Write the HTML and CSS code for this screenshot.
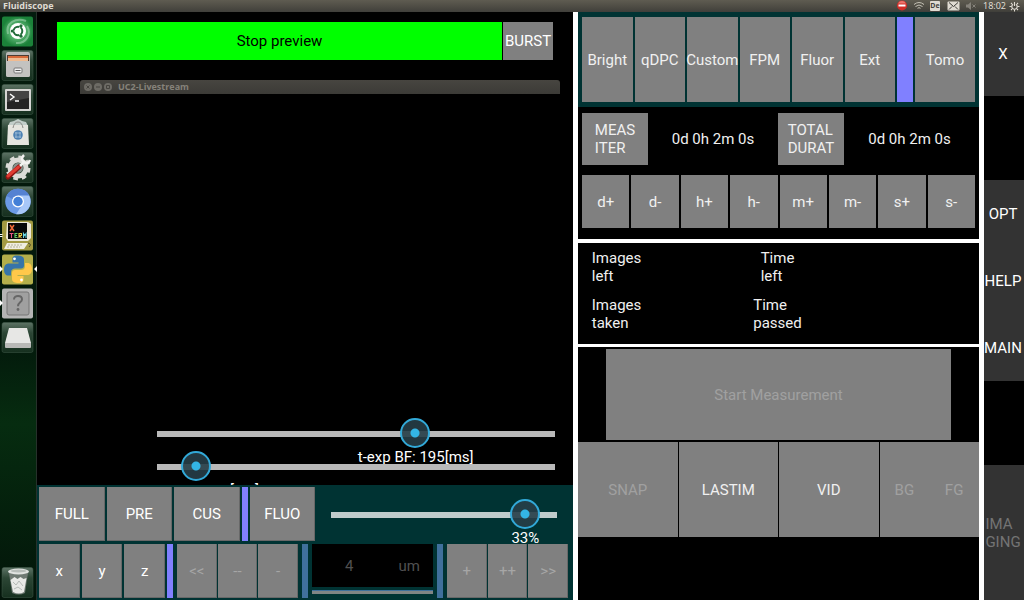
FILE: index.html
```html
<!DOCTYPE html>
<html lang="en">
<head>
<meta charset="utf-8">
<title>Fluidiscope</title>
<link rel="stylesheet" href="styles.css">
</head>
<body>
<header class="menubar">
  <span class="menubar-title">Fluidiscope</span>
  <div class="tray">
    <svg width="12" height="12" viewBox="0 0 12 12"><circle cx="6" cy="5.500" r="5" fill="#d22d27"/><path d="M2 3.500a4.500 4.500 0 0 1 8 0z" fill="#ea756c"/><rect x="2.500" y="4.500" width="7" height="2" fill="#fff"/></svg>
    <svg width="12" height="12" viewBox="0 0 12 12" fill="none" stroke="#c5c2b6"><path d="M1 4.500q5-4 10 0M2.500 6.500q3.500-3 7 0M4.500 8.300q1.500-1.300 3 0"/></svg>
    <span class="lang">De</span>
    <svg width="13" height="10" viewBox="0 0 13 10"><rect x=".5" y=".5" width="12" height="9" rx="1" fill="#dfdbd2"/><path d="M2 1.500l4.500 4 4.500-4M2 8.500l3-3M11 8.500l-3-3" fill="none" stroke="#3c3b37" stroke-width="1"/></svg>
    <svg width="12" height="12" viewBox="0 0 12 12"><path d="M1 4.500h2l3-2.500v8L3 7.500H1z" fill="#85827a"/><path d="M7.500 4.500l3 3M10.500 4.500l-3 3" stroke="#85827a"/></svg>
    <time class="clock">18:02</time>
    <svg width="11" height="11" viewBox="0 0 11 11" fill="none" stroke="#dfdbd2"><path d="M4 3.300a2.700 2.700 0 1 0 3 0" stroke-width="1.200"/><path d="M5.500 1v4M5.500 8.500v2M.5 5.500h2M8.500 5.500h2M2 2l1 1M9 2L8 3M2 9l1-1M9 9L8 8" stroke-width="1.100"/></svg>
  </div>
</header>

<main class="desktop">
  <nav class="launcher" aria-label="Launcher">
    <button class="tile" aria-label="Dash"><svg viewBox="0 0 37 31"><defs><radialGradient id="dash"><stop offset="0" stop-color="#b9dfc4"/><stop offset=".55" stop-color="#4fab68"/><stop offset="1" stop-color="#1b8239"/></radialGradient><linearGradient id="plate" x2="0" y2="1"><stop offset="0" stop-color="#5d7365"/><stop offset=".35" stop-color="#2c4635"/><stop offset="1" stop-color="#16301f"/></linearGradient></defs><rect x="2" y=".5" width="31" height="30" rx="2" fill="url(#dash)"/><path d="M8 18C5 7 16 1 26 5M27 10c5 8-1 18-11 17" fill="none" stroke="#9fd3ad" stroke-width="2" opacity=".6"/><circle cx="18" cy="15" r="8" fill="#fff"/><circle cx="18" cy="15" r="4.300" fill="none" stroke="#206a38" stroke-width="2"/><path d="M18 15L12 15M18 15l3-6M18 15l3 6" stroke="#fff"/><g fill="#206a38"><circle cx="12.300" cy="15" r="1.600"/><circle cx="21" cy="9.800" r="1.600"/><circle cx="21" cy="20.200" r="1.600"/></g></svg></button>
    <button class="tile" aria-label="Files"><svg viewBox="0 0 37 31"><rect class="plate" x="2" y=".5" width="31" height="30" rx="2"/><rect x="6" y="2" width="24" height="25" rx="2" fill="#b9b8b6"/><rect x="7" y="5" width="22" height="7" fill="#4d3c33"/><path d="M8 6h20v5H8z" fill="#d76a3a"/><path d="M8 8h20v4H8z" fill="#f0bb91"/><path d="M6 11h24v14q0 2-2 2H8q-2 0-2-2z" fill="#c3c2c0"/><rect x="14" y="18" width="8" height="5" rx="1" fill="#eee" stroke="#777"/><path d="M15.500 20.500h5" stroke="#555"/></svg></button>
    <button class="tile" aria-label="Terminal"><svg viewBox="0 0 37 31"><rect class="plate" x="2" y=".5" width="31" height="30" rx="2"/><rect x="5" y="5" width="26" height="22" rx="1" fill="#d5d5d3"/><rect x="7" y="7" width="22" height="18" fill="#242424"/><path d="M7 7h22v7L7 18z" fill="#444"/><path d="M10 10l4 3-4 3M15 17h4" fill="none" stroke="#fff" stroke-width="1.400"/></svg></button>
    <button class="tile" aria-label="Software"><svg viewBox="0 0 37 31"><rect class="plate" x="2" y=".5" width="31" height="30" rx="2"/><path d="M8 8l2-4 4-1 4-2 4 2 4 1 2 4z" fill="#c3ceca"/><path d="M8 7h20l1 20H7z" fill="#e6e5df"/><path d="M13 10q1-6 5-6t5 6" fill="none" stroke="#8c8c88"/><circle cx="18" cy="17" r="4.800" fill="#4c80b2"/><path d="M15 15h6M15 19h6M16 14v6M20 14v6" stroke="#a4c1db" stroke-width=".8"/></svg></button>
    <button class="tile" aria-label="Settings"><svg viewBox="0 0 37 31"><rect class="plate" x="2" y=".5" width="31" height="30" rx="2"/><circle cx="18" cy="16" r="8" fill="none" stroke="#dbdbd7" stroke-width="5"/><circle cx="18" cy="16" r="11" fill="none" stroke="#dbdbd7" stroke-width="3" stroke-dasharray="4.600 4.040"/><circle cx="18" cy="16" r="5" fill="#88918c"/><path d="M8 25L19 15" stroke="#8e1512" stroke-width="5" stroke-linecap="round"/><path d="M8 24L18.500 15" stroke="#e03b32" stroke-width="3" stroke-linecap="round"/><path d="M20 14l4-4M24 3q-4 4 0 7t6-2" fill="none" stroke="#f2f2f0" stroke-width="2.500"/></svg></button>
    <button class="tile" aria-label="Browser"><svg viewBox="0 0 37 31"><rect class="plate" x="2" y=".5" width="31" height="30" rx="2"/><circle cx="18" cy="15.500" r="12.800" fill="#6b9ae6"/><path d="M18 15.500L6.500 10A12.800 12.800 0 0 1 29.400 9.500z" fill="#5582d2"/><path d="M18 9.500H29A12.800 12.800 0 0 1 16 28.200l6-9z" fill="#a7c7f8"/><circle cx="18" cy="15.500" r="6" fill="#fff"/><circle cx="18" cy="15.500" r="4.700" fill="#427fd7"/></svg></button>
    <button class="tile" aria-label="XTerm"><svg viewBox="0 0 37 31"><rect x="2" y=".5" width="31" height="30" rx="2" fill="#a29a42"/><path d="M0 14.500h2.500M0 16.500h2.500" stroke="#fff"/><path d="M7 2h21l3 2v14l-3 3H8l-2-3z" fill="#ece8d8"/><rect x="8" y="3" width="19" height="16" fill="#080808"/><path d="M10 5l4 6M14 5l-4 6" stroke="#f06b38" stroke-width="1.500"/><g fill="none" stroke-width="1.100"><path d="M9.500 13.500h4M11.500 13.500V18" stroke="#e85585"/><path d="M17.500 13.500h-2.500v4h2.500M15 15.500h2" stroke="#5dce67"/><path d="M19 18v-4.500h2.500v2H19.500l2 2.500" stroke="#dfc343"/><path d="M23.500 18v-4.500l1.200 2 1.300-2V18" stroke="#68d6e1"/></g><path d="M7 23h21l-4 6H4z" fill="#f0eddf"/><path d="M8 25h14M7 27h13" stroke="#8f896d" stroke-width=".6" stroke-dasharray="2 1"/><path d="M28 23q4 1 1 4" fill="none" stroke="#4b4724"/></svg></button>
    <button class="tile" aria-label="Python"><svg viewBox="0 0 37 31"><rect x="2" y=".5" width="31" height="30" rx="2" fill="#b3af4b"/><path d="M0 12l3 3-3 3zM37 12l-3 3 3 3z" fill="#fff"/><path d="M17.500 1.500c-5 0-5 2-5 4v3h6v1H9c-3 0-5 2-5 6s2 6 4 6h3v-3c0-3 2-4 4-4h6c2 0 3-1 3-3V5.500c0-3-3-4-6.500-4z" fill="#3674a9"/><path d="M18.500 29c5 0 5-2 5-4v-3h-6v-1H27c3 0 5-2 5-6s-2-6-4-6h-3v3c0 3-2 4-4 4h-6c-2 0-3 1-3 3V25c0 3 3 4 6.500 4z" fill="#ffc84a"/><circle cx="14.500" cy="4.800" r="1.400" fill="#fff"/><circle cx="21.500" cy="26" r="1.400" fill="#fff"/></svg></button>
    <button class="tile" aria-label="Unknown application"><svg viewBox="0 0 37 31"><rect x="2" y=".5" width="31" height="30" rx="2" fill="#b4b4b4"/><path d="M0 12l3 3-3 3z" fill="#fff"/><rect x="7" y="4" width="22" height="23" rx="2" fill="#a0a0a0" stroke="#777"/><path d="M14 11.500c0-5 8-4.500 8-.3 0 3.300-4 3-4 7" fill="none" stroke="#666" stroke-width="2"/><circle cx="18" cy="21.500" r="1.400" fill="#666"/></svg></button>
    <button class="tile" aria-label="Drive"><svg viewBox="0 0 37 31"><rect class="plate" x="2" y=".5" width="31" height="30" rx="2"/><path d="M9 6h18l4 15v4H5v-4z" fill="#e7e7e5"/><path d="M5 21h26v4q0 1-1 1H6q-1 0-1-1z" fill="#b9b9b7"/></svg></button>
    <button class="tile tile-last" aria-label="Trash"><svg viewBox="0 0 37 31"><rect class="plate" x="2" y=".5" width="31" height="30" rx="2"/><path d="M9 6h19l-3 20q-6 3-13 0z" fill="#6f7a73"/><path d="M10.500 13l4-3 3 2 3-2 3 2 3-1-2.500 14q-5 3-11 0z" fill="#e8e9e6"/><path d="M13 15l3 3 3-4 4 5M14 22l4-2 4 3" fill="none" stroke="#b5bab6"/><ellipse cx="18.500" cy="4.500" rx="10.500" ry="3" fill="#e0e3e0"/><ellipse cx="18.500" cy="4" rx="8" ry="1.500" fill="#b7bdb9"/></svg></button>
  </nav>

  <section class="stage">
    <div class="preview">
      <div class="preview-actions">
        <button class="btn btn-stop">Stop preview</button>
        <button class="btn btn-burst">BURST</button>
      </div>
      <div class="window-title">
        <svg width="30" height="10" viewBox="0 0 30 10"><g fill="#6d6b65"><circle cx="5" cy="5" r="4"/><circle cx="15" cy="5" r="4"/><circle cx="25" cy="5" r="4"/></g><path d="M3.500 3.500l3 3M6.500 3.500l-3 3M13 5h4M23.500 3.500h3v3h-3z" fill="none" stroke="#45433e"/></svg>
        <span>UC2-Livestream</span>
      </div>
      <div class="exposure">
        <div class="slider-box">
          <input class="slider" id="exp-bf" type="range" min="0" max="1000" value="660">
          <label class="slider-label at-bf" for="exp-bf">t-exp BF: 195[ms]</label>
        </div>
        <div class="slider-box">
          <input class="slider" id="exp-fluo" type="range" min="0" max="1000" value="65">
          <label class="slider-label at-fluo" for="exp-fluo">[ms]</label>
        </div>
      </div>
    </div>
    <div class="controls">
      <div class="control-row">
        <div class="pattern-buttons">
          <button class="btn">FULL</button><button class="btn">PRE</button><button class="btn">CUS</button>
          <span class="bar"></span>
          <button class="btn">FLUO</button>
        </div>
        <div class="slider-box intensity">
          <input class="slider slider-teal" id="intensity" type="range" min="0" max="1000" value="913">
          <label class="slider-label at-intensity" for="intensity">33%</label>
        </div>
      </div>
      <div class="control-row motion">
        <div class="axis-buttons">
          <button class="btn">x</button><button class="btn">y</button><button class="btn">z</button>
        </div>
        <span class="bar"></span>
        <div class="step-buttons">
          <button class="btn" disabled>&lt;&lt;</button><button class="btn" disabled>--</button><button class="btn" disabled>-</button>
        </div>
        <span class="bar bar-dim"></span>
        <div class="distance">
          <div class="distance-field">
            <input class="distance-value" id="distance" type="text" value="4">
            <label class="distance-unit" for="distance">um</label>
          </div>
          <span class="distance-line"></span>
        </div>
        <span class="bar bar-dim"></span>
        <div class="step-buttons">
          <button class="btn" disabled>+</button><button class="btn" disabled>++</button><button class="btn" disabled>&gt;&gt;</button>
        </div>
      </div>
    </div>
  </section>

  <section class="panels">
    <div class="modes">
      <button class="btn">Bright</button><button class="btn">qDPC</button><button class="btn">Custom</button><button class="btn">FPM</button><button class="btn">Fluor</button><button class="btn">Ext</button>
      <span class="bar bar-wide"></span>
      <button class="btn btn-tomo">Tomo</button>
    </div>
    <div class="timing">
      <div class="timing-row">
        <button class="btn"><span class="stack">MEAS<br>ITER</span></button>
        <output>0d 0h 2m 0s</output>
        <button class="btn"><span class="stack">TOTAL<br>DURAT</span></button>
        <output>0d 0h 2m 0s</output>
      </div>
      <div class="step-row">
        <button class="btn">d+</button><button class="btn">d-</button><button class="btn">h+</button><button class="btn">h-</button><button class="btn">m+</button><button class="btn">m-</button><button class="btn">s+</button><button class="btn">s-</button>
      </div>
    </div>
    <div class="status">
      <span class="stack">Images<br>left</span><span></span><span class="stack">Time<br>left</span><span></span>
      <span class="stack">Images<br>taken</span><span></span><span class="stack">Time<br>passed</span><span></span>
    </div>
    <div class="capture">
      <button class="btn btn-start" disabled>Start Measurement</button>
      <div class="capture-row">
        <button class="btn" disabled>SNAP</button><button class="btn">LASTIM</button><button class="btn">VID</button>
        <div class="ground">
          <button class="btn" disabled>BG</button><button class="btn" disabled>FG</button>
        </div>
      </div>
    </div>
  </section>

  <nav class="rail" aria-label="Screens">
    <button class="rail-btn rail-close">X</button>
    <div class="rail-group">
      <button class="rail-btn">OPT</button><button class="rail-btn">HELP</button><button class="rail-btn">MAIN</button>
    </div>
    <button class="rail-btn rail-imaging" disabled><span class="stack">IMA<br>GING</span></button>
  </nav>
</main>
</body>
</html>
```
FILE: styles.css
```css
* { box-sizing: border-box; }

body {
  margin: 0;
  min-height: 100vh;
  display: flex;
  flex-direction: column;
  background: #000;
  color: #fff;
  font: 15px/18px Roboto, sans-serif;
}

button, input { font: inherit; color: inherit; border: 0; margin: 0; padding: 0; border-radius: 0; }

/* Menu bar */
.menubar {
  display: flex;
  justify-content: space-between;
  align-items: center;
  height: 12px;
  padding: 0 4px 0 3px;
  background: linear-gradient(#5f5c51, #403f3a);
  color: #dfdbd2;
  font: 9px/12px "Noto Sans", sans-serif;
}
.menubar-title { font-family: "Open Sans", sans-serif; font-weight: 700; }
.tray { display: flex; align-items: center; gap: 5px; }
.lang {
  width: 10px;
  height: 10px;
  margin-right: 2px;
  border-radius: 1px;
  background: #dfdbd2;
  color: #45433e;
  font-size: 7px;
  font-weight: 700;
  line-height: 10px;
  text-align: center;
}
.clock { margin: 0 -2px 0 1px; }

.desktop {
  flex: 1;
  display: grid;
  grid-template-columns: 37px minmax(0, 536fr) minmax(0, 411fr) 40px;
}

/* Launcher */
.launcher {
  display: flex;
  flex-direction: column;
  gap: 3px;
  padding: 4px 0 2px;
  background:
    linear-gradient(#26302a, #26302a) right / 1px 100% no-repeat,
    linear-gradient(#041c0e, #03180b 55%, #062c10 70%, #04200c 85%, #03150a);
}
.tile { display: block; background: none; }
.tile svg { display: block; width: 37px; height: 31px; }
.tile-last { margin-top: auto; }
.plate { fill: url(#plate); stroke: #40594a; stroke-opacity: 0.5; }

/* Shared pieces */
.btn {
  flex: 1 1 0;
  min-width: 0;
  display: flex;
  align-items: center;
  justify-content: center;
  background: #808080;
  color: #fff;
  white-space: nowrap;
}
.btn:disabled { color: #a6a6a6; }
.bar { flex: 0 0 6px; background: #8080ff; }
.bar-dim { background: #40709c; }
.bar-wide { flex-basis: 16px; }
.stack { text-align: left; }

/* Preview and sliders */
.stage { display: flex; flex-direction: column; }
.preview { flex: 1; display: flex; flex-direction: column; padding-top: 10px; overflow: hidden; }
.preview-actions { display: flex; gap: 1px; height: 38px; margin: 0 20px; }
.btn-stop { background: #0f0; color: #000; }
.btn-burst { flex: 0 0 50px; }
.window-title {
  display: flex;
  align-items: center;
  gap: 5px;
  height: 14px;
  margin: 20px 13px 0 43px;
  padding-left: 3px;
  border-radius: 3px 3px 0 0;
  background: linear-gradient(#474540, #3c3b37);
  color: #85827a;
  font: 700 9px/14px "Open Sans", sans-serif;
}
.exposure { display: flex; flex-direction: column; gap: 3px; margin: auto 18px 4px 120px; }
.slider-box { position: relative; height: 30px; }
.slider {
  -webkit-appearance: none;
  appearance: none;
  display: block;
  width: 100%;
  height: 30px;
  background: linear-gradient(#b9b9b9, #b9b9b9) 0 13px / 100% 6px no-repeat;
}
.slider-teal { background-image: linear-gradient(#c0cccc, #c0cccc); }
.slider::-webkit-slider-runnable-track { height: 30px; }
.slider::-webkit-slider-thumb {
  -webkit-appearance: none;
  width: 30px;
  height: 30px;
  border-radius: 50%;
  border: 2px solid #32a9d8;
  background: radial-gradient(circle, #33b5e5 4px, rgba(38, 62, 72, 0.9) 5px);
}
.slider-label { position: absolute; top: 30px; transform: translateX(-50%); white-space: nowrap; }
.at-bf { left: 65%; }
.at-fluo { left: 22%; }
.at-intensity { left: 86%; }

/* Stage controls */
.controls {
  display: flex;
  flex-direction: column;
  gap: 3px;
  padding: 2px 5px 2px 2px;
  background: #033;
}
.control-row { display: flex; height: 54px; }
.controls .btn { box-shadow: inset -1px -1px #686868; }
.pattern-buttons { flex: 276 1 0; display: flex; gap: 2px; }
.intensity { flex: 226 1 0; margin: 12px 11px 12px 16px; }
.motion { gap: 4px; }
.axis-buttons { flex: 126 1 0; display: flex; gap: 2px; margin-right: -2px; }
.step-buttons { flex: 121 1 0; display: flex; gap: 1px; }
.distance { flex: 121 1 0; min-width: 0; display: flex; flex-direction: column; gap: 3px; }
.distance-field {
  flex: 1;
  display: flex;
  align-items: center;
  padding-right: 13px;
  background: #000;
  color: #505050;
}
.distance-value { flex: 1; min-width: 0; padding-right: 12px; background: none; text-align: center; }
.distance-line { height: 4px; margin-bottom: 4px; background: #808585; border-top: 1px solid #40709c; }

/* Measurement panels */
.panels {
  display: flex;
  flex-direction: column;
  border: solid #fff;
  border-width: 0 5px;
}
.panels .btn, .timing, .status { color: #f0f0f0; }
.panels .btn:disabled { color: #a0a0a0; }
.modes { display: flex; gap: 2px; height: 95px; padding: 5px 4px; background: #033; }
.btn-tomo { flex: 0 0 60px; }
.timing {
  display: flex;
  flex-direction: column;
  gap: 10px;
  padding: 6px 4px 11px;
  border-bottom: 4px solid #fff;
}
.timing-row { display: grid; grid-template-columns: 66fr 130fr 66fr 131fr; height: 52px; }
.timing-row output { align-self: center; text-align: center; }
.step-row { display: flex; gap: 2px; height: 53px; }
.status {
  display: grid;
  grid-template-columns: 77fr 84fr 77fr 163fr;
  justify-items: center;
  row-gap: 11px;
  padding: 6px 0 12px;
  border-bottom: 3px solid #fff;
}
.capture { padding-top: 2px; }
.btn-start { width: 86%; height: 91px; margin: 0 auto 2px; }
.capture-row { display: flex; gap: 1px; height: 95px; }
.capture-row > * { flex: 1 1 0; }
.ground { display: flex; }

/* Screen rail */
.rail { display: flex; flex-direction: column; justify-content: space-between; }
.rail-btn {
  flex: 1;
  display: flex;
  align-items: center;
  justify-content: center;
  padding-right: 2px;
  background: #333;
  color: #fff;
}
.rail-btn:disabled { color: #747474; }
.rail-close { flex: 0 0 84px; }
.rail-group { height: 201px; display: flex; flex-direction: column; }
.rail-imaging { flex: 0 0 135px; }
```
